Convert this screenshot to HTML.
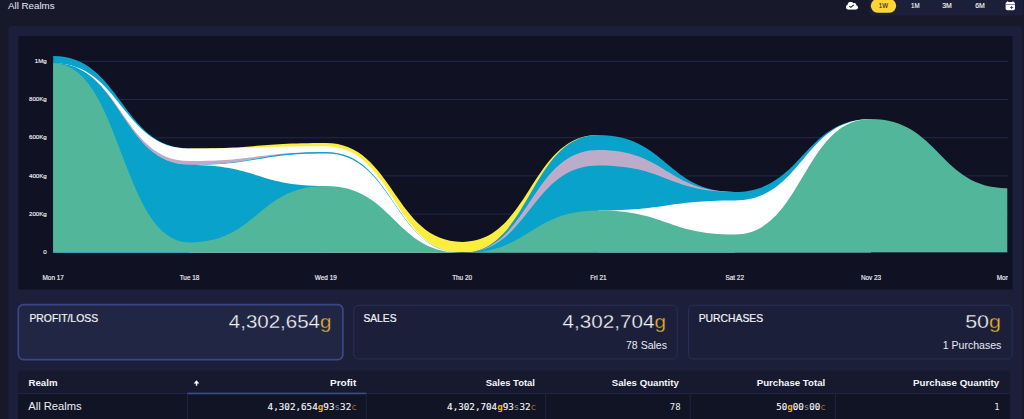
<!DOCTYPE html>
<html lang="en"><head><meta charset="utf-8"><title>All Realms</title>
<style>
html,body{margin:0;padding:0;}
body{width:1024px;height:419px;overflow:hidden;background:#17192b;color:#eceef5;font-family:"Liberation Sans",sans-serif;}
svg.page{display:block;position:absolute;left:0;top:0;font-family:"Liberation Sans",sans-serif;}
.ticks text{font-size:6.4px;stroke:#f2f3f8;stroke-width:0.14px;}
</style></head><body>
<svg class="page" width="1024" height="419" viewBox="0 0 1024 419">
<defs><clipPath id="cp"><rect x="53" y="40" width="955" height="212.300"/></clipPath><clipPath id="cl"><rect x="18" y="36" width="990" height="254"/></clipPath></defs>
<g class="shapes">
<rect x="869.2" y="-5" width="154.2" height="20.5" rx="3" fill="#1c1f3a"/>
<rect x="870.8" y="-1" width="25.4" height="13.65" rx="6.8" fill="#fcd535"/>
<rect x="8.4" y="26" width="1013.8" height="414" rx="3.5" fill="#1c1f3a"/>
<rect x="18.3" y="36" width="994.4" height="253.6" rx="1" fill="#101223"/>
</g>
<g class="grid">
<line x1="53" x2="1008" y1="252.3" y2="252.3" stroke="#23274a" stroke-width="1"/>
<line x1="53" x2="1008" y1="214.1" y2="214.1" stroke="#23274a" stroke-width="1"/>
<line x1="53" x2="1008" y1="175.9" y2="175.9" stroke="#23274a" stroke-width="1"/>
<line x1="53" x2="1008" y1="137.7" y2="137.7" stroke="#23274a" stroke-width="1"/>
<line x1="53" x2="1008" y1="99.5" y2="99.5" stroke="#23274a" stroke-width="1"/>
<line x1="53" x2="1008" y1="61.3" y2="61.3" stroke="#23274a" stroke-width="1"/>
</g>
<g clip-path="url(#cp)">
<path d="M189.5,148.5C257.65,148.5 257.65,143.1 325.8,143.1C393.95,143.1 393.95,241.9 462.1,241.9C530.25,241.9 530.25,135 598.4,135L598.4,254.3 L189.5,254.3 Z" fill="#fdee3e"/>
<path d="M53.2,56C121.35,56 121.35,148.5 189.5,148.5L189.5,254.3 L53.2,254.3 Z" fill="#08a2cb"/>
<path d="M462.1,252.9C530.25,252.9 530.25,135 598.4,135C666.55,135 666.55,191.9 734.7,191.9L734.7,254.3 L462.1,254.3 Z" fill="#08a2cb"/>
<path d="M53.2,63.2C121.35,63.2 121.35,148.5 189.5,148.5C257.65,148.5 257.65,146.2 325.8,146.2C393.95,146.2 393.95,252.9 462.1,252.9L462.1,254.3 L53.2,254.3 Z" fill="#ffffff"/>
<path d="M53.2,63.2C121.35,63.2 121.35,161.1 189.5,161.1C257.65,161.1 257.65,152 325.8,152L325.8,254.3 L53.2,254.3 Z" fill="#bdacc9"/>
<path d="M462.1,252.9C530.25,252.9 530.25,150.1 598.4,150.1C666.55,150.1 666.55,191.9 734.7,191.9L734.7,254.3 L462.1,254.3 Z" fill="#bdacc9"/>
<path d="M53.2,63.2C121.35,63.2 121.35,164.8 189.5,164.8C257.65,164.8 257.65,152 325.8,152C393.95,152 393.95,252.9 462.1,252.9C530.25,252.9 530.25,165.5 598.4,165.5C666.55,165.5 666.55,191.9 734.7,191.9C802.85,191.9 802.85,119.1 871,119.1L871,254.3 L53.2,254.3 Z" fill="#08a2cb"/>
<path d="M189.5,165C257.65,165 257.65,153.5 325.8,153.5C393.95,153.5 393.95,252.9 462.1,252.9L462.1,254.3 L189.5,254.3 Z" fill="#ffffff"/>
<path d="M598.4,210.5C666.55,210.5 666.55,200.5 734.7,200.5C802.85,200.5 802.85,119.1 871,119.1L871,254.3 L598.4,254.3 Z" fill="#ffffff"/>
<path d="M53.2,63.2C121.35,63.2 121.35,165 189.5,165C257.65,165 257.65,186 325.8,186L325.8,254.3 L53.2,254.3 Z" fill="#08a2cb"/>
<path d="M53.2,63.2C121.35,63.2 121.35,242.5 189.5,242.5C257.65,242.5 257.65,186 325.8,186C393.95,186 393.95,252.9 462.1,252.9C530.25,252.9 530.25,210.5 598.4,210.5C666.55,210.5 666.55,234.5 734.7,234.5C802.85,234.5 802.85,119.1 871,119.1C939.15,119.1 939.15,188.2 1007.3,188.2L1007.3,254.3 L53.2,254.3 Z" fill="#52b69a"/>
</g>
<g class="ticks" fill="#f2f3f8">
<text x="46.700" y="254" text-anchor="end" style="font-size:6.1px">0</text>
<text x="46.700" y="215.8" text-anchor="end" style="font-size:6.1px">200Kg</text>
<text x="46.700" y="177.6" text-anchor="end" style="font-size:6.1px">400Kg</text>
<text x="46.700" y="139.4" text-anchor="end" style="font-size:6.1px">600Kg</text>
<text x="46.700" y="101.2" text-anchor="end" style="font-size:6.1px">800Kg</text>
<text x="46.700" y="63" text-anchor="end" style="font-size:6.1px">1Mg</text>
<g clip-path="url(#cl)">
<text x="53.2" y="279.700" text-anchor="middle">Mon 17</text>
<text x="189.5" y="279.700" text-anchor="middle">Tue 18</text>
<text x="325.8" y="279.700" text-anchor="middle">Wed 19</text>
<text x="462.1" y="279.700" text-anchor="middle">Thu 20</text>
<text x="598.4" y="279.700" text-anchor="middle">Fri 21</text>
<text x="734.7" y="279.700" text-anchor="middle">Sat 22</text>
<text x="871" y="279.700" text-anchor="middle">Nov 23</text>
<text x="1007.3" y="279.700" text-anchor="middle">Mon 24</text>
</g>
</g>
<g class="cards">
<rect x="18.3" y="304.6" width="324.6" height="55" rx="5" fill="#212645" stroke="#3a4687" stroke-width="1.7"/>
<rect x="353.8" y="305.3" width="323.4" height="53.6" rx="4.5" fill="#1c1f3a" stroke="#292e58" stroke-width="1"/>
<rect x="688.5" y="305.3" width="323.7" height="53.6" rx="4.5" fill="#1c1f3a" stroke="#292e58" stroke-width="1"/>
</g>
<g class="table">
<path d="M18,394 V373.500 a3,3 0 0 1 3,-3 H1007.200 a3,3 0 0 1 3,3 V394 Z" fill="#171a2e"/>
<rect x="18" y="394" width="992.200" height="30" fill="#111425"/>
<rect x="18" y="393.100" width="992.200" height="1" fill="#20254a"/>
<rect x="187.500" y="392.600" width="178.800" height="1.700" fill="#3a4a8f"/>
<rect x="187" y="394.200" width="1" height="30" fill="#1f2340"/>
<rect x="365.8" y="394.200" width="1" height="30" fill="#1f2340"/>
<rect x="545.1" y="394.200" width="1" height="30" fill="#1f2340"/>
<rect x="689.8" y="394.200" width="1" height="30" fill="#1f2340"/>
<rect x="834.9" y="394.200" width="1" height="30" fill="#1f2340"/>
</g>
<g class="icons">
<svg x="845.850" y="1.840" width="12.200" height="8" viewBox="0 32 640 448" preserveAspectRatio="none"><path fill="#fff" d="M537.6 226.6c4.100-10.700 6.400-22.400 6.400-34.600 0-53-43-96-96-96-19.700 0-38.100 6-53.300 16.200C367 64.200 315.300 32 256 32c-88.400 0-160 71.600-160 160 0 2.700.1 5.400.2 8.100C40.200 219.800 0 273.200 0 336c0 79.500 64.500 144 144 144h368c70.700 0 128-57.300 128-128 0-61.900-44-113.600-102.400-125.400z"/><path fill="none" stroke="#1b1d33" stroke-width="58" stroke-linecap="round" stroke-linejoin="round" d="M196 290l66 54 136-124"/></svg>
<g transform="translate(1004,0)"><rect x="1.600" y="2.100" width="9.400" height="8.100" rx="1.700" fill="#fff"/><rect x="3.050" y="1.200" width="1.100" height="2" rx="0.400" fill="#fff"/><rect x="8.350" y="1.200" width="1.100" height="2" rx="0.400" fill="#fff"/><rect x="1.600" y="4.150" width="9.400" height="0.550" fill="#2a2e4f"/><path d="M7.600 6.300v2.400M6.400 7.500h2.400" stroke="#23263f" stroke-width="0.750" stroke-linecap="round"/></g>
<path d="M196.500 380.200L199.300 383.400H197.250V385.800H195.750V383.400H193.700Z" fill="#fff"/>
</g>
<g class="labels">
<text x="8" y="9" font-size="9.8" fill="#e9ebf3" textLength="46.6" lengthAdjust="spacingAndGlyphs">All Realms</text>
<text x="883.4" y="7.6" font-size="6.6" text-anchor="middle" fill="#2a2410" textLength="9.2" lengthAdjust="spacingAndGlyphs" stroke="#2a2410" stroke-width="0.1">1W</text>
<text x="915.3" y="7.6" font-size="6.6" text-anchor="middle" fill="#ffffff" textLength="8.5" lengthAdjust="spacingAndGlyphs" stroke="#ffffff" stroke-width="0.1">1M</text>
<text x="947" y="7.6" font-size="6.6" text-anchor="middle" fill="#ffffff" textLength="9.6" lengthAdjust="spacingAndGlyphs" stroke="#ffffff" stroke-width="0.1">3M</text>
<text x="980" y="7.6" font-size="6.6" text-anchor="middle" fill="#ffffff" textLength="9.6" lengthAdjust="spacingAndGlyphs" stroke="#ffffff" stroke-width="0.1">6M</text>
<text x="29.4" y="321.6" font-size="10.7" fill="#f1f2f7" textLength="68.7" lengthAdjust="spacingAndGlyphs" stroke="#f1f2f7" stroke-width="0.2">PROFIT/LOSS</text>
<text x="363.4" y="321.7" font-size="10.7" fill="#f1f2f7" textLength="33.2" lengthAdjust="spacingAndGlyphs" stroke="#f1f2f7" stroke-width="0.2">SALES</text>
<text x="698.7" y="321.7" font-size="10.7" fill="#f1f2f7" textLength="64.5" lengthAdjust="spacingAndGlyphs" stroke="#f1f2f7" stroke-width="0.2">PURCHASES</text>
<text x="331.4" y="328.2" font-size="19" text-anchor="end" fill="#f4f5fa" textLength="102.6" lengthAdjust="spacingAndGlyphs" stroke="#212645" stroke-width="0.28">4,302,654<tspan fill="#e8b325">g</tspan></text>
<text x="666" y="328.2" font-size="19" text-anchor="end" fill="#f4f5fa" textLength="103.5" lengthAdjust="spacingAndGlyphs" stroke="#1c1f3a" stroke-width="0.28">4,302,704<tspan fill="#e8b325">g</tspan></text>
<text x="1001" y="328.2" font-size="19" text-anchor="end" fill="#f4f5fa" textLength="35.8" lengthAdjust="spacingAndGlyphs" stroke="#1c1f3a" stroke-width="0.28">50<tspan fill="#e8b325">g</tspan></text>
<text x="667" y="349.3" font-size="10.7" text-anchor="end" fill="#e9ebf3" textLength="41" lengthAdjust="spacingAndGlyphs">78 Sales</text>
<text x="1001.4" y="349.2" font-size="10.7" text-anchor="end" fill="#e9ebf3" textLength="58.6" lengthAdjust="spacingAndGlyphs">1 Purchases</text>
<text x="28.5" y="385.75" font-size="9.8" font-weight="bold" fill="#f4f5fa" textLength="29" lengthAdjust="spacingAndGlyphs">Realm</text>
<text x="356.25" y="385.75" font-size="9.8" text-anchor="end" font-weight="bold" fill="#f4f5fa" textLength="26.25" lengthAdjust="spacingAndGlyphs">Profit</text>
<text x="535" y="385.75" font-size="9.8" text-anchor="end" font-weight="bold" fill="#f4f5fa" textLength="49.25" lengthAdjust="spacingAndGlyphs">Sales Total</text>
<text x="678.75" y="385.75" font-size="9.8" text-anchor="end" font-weight="bold" fill="#f4f5fa" textLength="67" lengthAdjust="spacingAndGlyphs">Sales Quantity</text>
<text x="825.2" y="385.75" font-size="9.8" text-anchor="end" font-weight="bold" fill="#f4f5fa" textLength="68.5" lengthAdjust="spacingAndGlyphs">Purchase Total</text>
<text x="999.25" y="385.75" font-size="9.8" text-anchor="end" font-weight="bold" fill="#f4f5fa" textLength="86.25" lengthAdjust="spacingAndGlyphs">Purchase Quantity</text>
<text x="28.2" y="410" font-size="10.5" fill="#eceef5" textLength="53.5" lengthAdjust="spacingAndGlyphs">All Realms</text>
<text x="356.8" y="410.3" font-size="8.7" text-anchor="end" fill="#f6f7fb" textLength="89.2" lengthAdjust="spacingAndGlyphs" font-family="DejaVu Sans Mono, Liberation Mono, monospace" stroke="#f6f7fb" stroke-width="0.12">4,302,654<tspan fill="#e8b325" stroke="none" font-weight="bold">g</tspan>93<tspan fill="#8b8f9c" stroke="none">s</tspan>32<tspan fill="#a0623a" stroke="none">c</tspan></text>
<text x="536.1" y="410.3" font-size="8.7" text-anchor="end" fill="#f6f7fb" textLength="89" lengthAdjust="spacingAndGlyphs" font-family="DejaVu Sans Mono, Liberation Mono, monospace" stroke="#f6f7fb" stroke-width="0.12">4,302,704<tspan fill="#e8b325" stroke="none" font-weight="bold">g</tspan>93<tspan fill="#8b8f9c" stroke="none">s</tspan>32<tspan fill="#a0623a" stroke="none">c</tspan></text>
<text x="680.6" y="410.3" font-size="8.7" text-anchor="end" fill="#eceef5" textLength="10.75" lengthAdjust="spacingAndGlyphs" font-family="DejaVu Sans Mono, Liberation Mono, monospace">78</text>
<text x="825.8" y="410.3" font-size="8.7" text-anchor="end" fill="#f6f7fb" textLength="49.5" lengthAdjust="spacingAndGlyphs" font-family="DejaVu Sans Mono, Liberation Mono, monospace" stroke="#f6f7fb" stroke-width="0.12">50<tspan fill="#e8b325" stroke="none" font-weight="bold">g</tspan>00<tspan fill="#8b8f9c" stroke="none">s</tspan>00<tspan fill="#a0623a" stroke="none">c</tspan></text>
<text x="999.5" y="410.3" font-size="8.7" text-anchor="end" fill="#eceef5" font-family="DejaVu Sans Mono, Liberation Mono, monospace">1</text>
</g>
</svg>
</body></html>
